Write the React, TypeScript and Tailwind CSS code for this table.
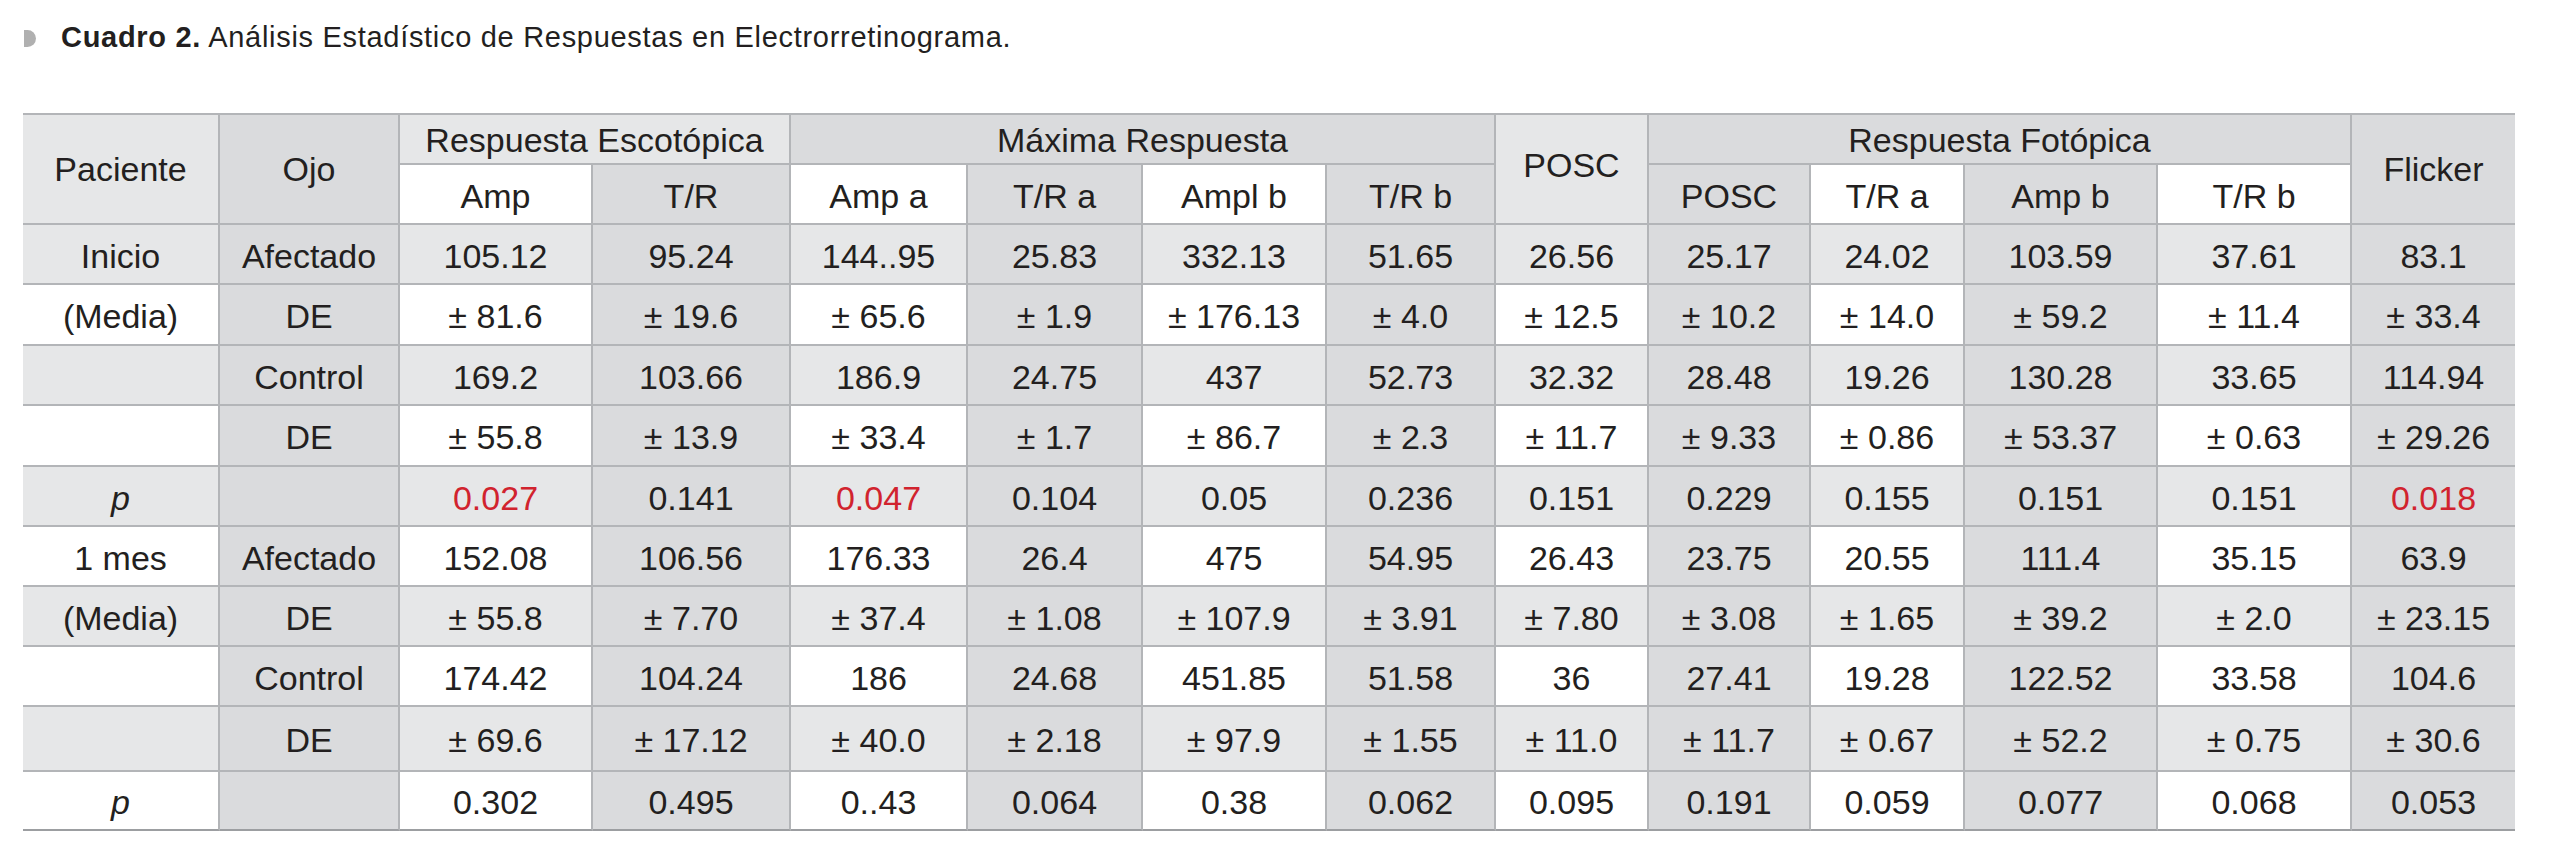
import React from "react";

const LIGHT = "bg-[#e6e7e8]";
const DARK = "bg-[#dadbdd]";
const WHITE = "bg-white";

const rows: string[][] = [
  ["Inicio", "Afectado", "105.12", "95.24", "144..95", "25.83", "332.13", "51.65", "26.56", "25.17", "24.02", "103.59", "37.61", "83.1"],
  ["(Media)", "DE", "± 81.6", "± 19.6", "± 65.6", "± 1.9", "± 176.13", "± 4.0", "± 12.5", "± 10.2", "± 14.0", "± 59.2", "± 11.4", "± 33.4"],
  ["", "Control", "169.2", "103.66", "186.9", "24.75", "437", "52.73", "32.32", "28.48", "19.26", "130.28", "33.65", "114.94"],
  ["", "DE", "± 55.8", "± 13.9", "± 33.4", "± 1.7", "± 86.7", "± 2.3", "± 11.7", "± 9.33", "± 0.86", "± 53.37", "± 0.63", "± 29.26"],
  ["p", "", "0.027", "0.141", "0.047", "0.104", "0.05", "0.236", "0.151", "0.229", "0.155", "0.151", "0.151", "0.018"],
  ["1 mes", "Afectado", "152.08", "106.56", "176.33", "26.4", "475", "54.95", "26.43", "23.75", "20.55", "111.4", "35.15", "63.9"],
  ["(Media)", "DE", "± 55.8", "± 7.70", "± 37.4", "± 1.08", "± 107.9", "± 3.91", "± 7.80", "± 3.08", "± 1.65", "± 39.2", "± 2.0", "± 23.15"],
  ["", "Control", "174.42", "104.24", "186", "24.68", "451.85", "51.58", "36", "27.41", "19.28", "122.52", "33.58", "104.6"],
  ["", "DE", "± 69.6", "± 17.12", "± 40.0", "± 2.18", "± 97.9", "± 1.55", "± 11.0", "± 11.7", "± 0.67", "± 52.2", "± 0.75", "± 30.6"],
  ["p", "", "0.302", "0.495", "0..43", "0.064", "0.38", "0.062", "0.095", "0.191", "0.059", "0.077", "0.068", "0.053"],
];

const redCells = new Set(["4-2", "4-4", "4-13"]);

function DataCell({ r, c, text }: { r: number; c: number; text: string }) {
  const darkCol = c % 2 === 1;
  const lightRow = r % 2 === 0;
  const bg = darkCol ? DARK : lightRow ? LIGHT : WHITE;
  const last = r === rows.length - 1;
  const lastCol = c === 13;
  const red = redCells.has(`${r}-${c}`);
  const italic = text === "p" && c === 0;
  return (
    <div
      className={[
        "flex items-center justify-center pt-[3px]",
        bg,
        last ? "border-b-2 border-b-[#9c9ea1]" : "border-b-2 border-b-[#b3b5b8]",
        lastCol ? "" : "border-r-2 border-r-[#b3b5b8]",
        red ? "text-[#d1232e]" : "text-[#231f20]",
        italic ? "italic" : "",
      ].join(" ")}
    >
      {text}
    </div>
  );
}

function H({ children, className }: { children: React.ReactNode; className: string }) {
  return (
    <div className={"flex items-center justify-center border-b-2 border-b-[#b3b5b8] " + className}>
      {children}
    </div>
  );
}

export default function App() {
  return (
    <div className="min-h-[866px] w-[2554px] bg-white pt-[22px] pl-[23px] font-['Liberation_Sans',Arial,sans-serif] text-[#231f20]">
      <div className="flex h-[30px] items-center">
        <div className="mt-[2px] ml-[1px] h-[17px] w-[12px] rounded-r-full bg-[#b0b0b0]" />
        <div className="ml-[25px] text-[29px] leading-none tracking-[0.7px]">
          <span className="font-bold">Cuadro 2.</span> Análisis Estadístico de Respuestas en Electrorretinograma.
        </div>
      </div>

      <div className="mt-[61px] w-[2492px] border-t-2 border-t-[#b3b5b8]">
        <div className="grid grid-cols-[197px_180px_193px_198px_177px_175px_184px_169px_153px_162px_154px_193px_194px_163px] grid-rows-[50px_60px_60px_61px_60px_61px_60px_60px_60px_60px_65px_59px] text-[34px] leading-none">
          <H className={"row-span-2 border-r-2 border-r-[#b3b5b8] " + LIGHT}>Paciente</H>
          <H className={"row-span-2 border-r-2 border-r-[#b3b5b8] " + DARK}>Ojo</H>
          <H className={"col-span-2 border-r-2 border-r-[#b3b5b8] pt-[2px] " + LIGHT}>Respuesta Escotópica</H>
          <H className={"col-span-4 border-r-2 border-r-[#b3b5b8] pt-[2px] " + DARK}>Máxima Respuesta</H>
          <H className={"row-span-2 border-r-2 border-r-[#b3b5b8] pb-[8px] " + LIGHT}>POSC</H>
          <H className={"col-span-4 border-r-2 border-r-[#b3b5b8] pt-[2px] " + DARK}>Respuesta Fotópica</H>
          <H className={"row-span-2 " + DARK}>Flicker</H>

          <H className={"border-r-2 border-r-[#b3b5b8] pt-[3px] " + WHITE}>Amp</H>
          <H className={"border-r-2 border-r-[#b3b5b8] pt-[3px] " + DARK}>T/R</H>
          <H className={"border-r-2 border-r-[#b3b5b8] pt-[3px] " + WHITE}>Amp a</H>
          <H className={"border-r-2 border-r-[#b3b5b8] pt-[3px] " + DARK}>T/R a</H>
          <H className={"border-r-2 border-r-[#b3b5b8] pt-[3px] " + WHITE}>Ampl b</H>
          <H className={"border-r-2 border-r-[#b3b5b8] pt-[3px] " + DARK}>T/R b</H>
          <H className={"border-r-2 border-r-[#b3b5b8] pt-[3px] " + DARK}>POSC</H>
          <H className={"border-r-2 border-r-[#b3b5b8] pt-[3px] " + WHITE}>T/R a</H>
          <H className={"border-r-2 border-r-[#b3b5b8] pt-[3px] " + DARK}>Amp b</H>
          <H className={"border-r-2 border-r-[#b3b5b8] pt-[3px] " + WHITE}>T/R b</H>

          {rows.map((row, r) =>
            row.map((text, c) => <DataCell key={`${r}-${c}`} r={r} c={c} text={text} />)
          )}
        </div>
      </div>
    </div>
  );
}
